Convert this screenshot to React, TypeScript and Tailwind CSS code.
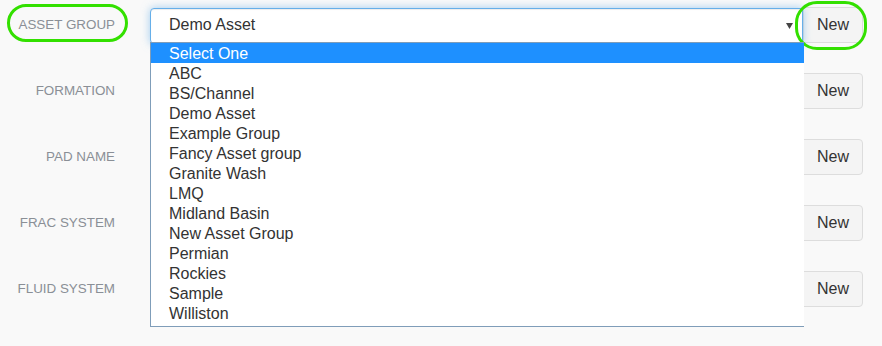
import React from "react";

const labels = ["ASSET GROUP", "FORMATION", "PAD NAME", "FRAC SYSTEM", "FLUID SYSTEM"];
const options = [
  "Select One",
  "ABC",
  "BS/Channel",
  "Demo Asset",
  "Example Group",
  "Fancy Asset group",
  "Granite Wash",
  "LMQ",
  "Midland Basin",
  "New Asset Group",
  "Permian",
  "Rockies",
  "Sample",
  "Williston",
];

export default function App() {
  return (
    <div
      className="relative h-[346px] w-[882px] overflow-hidden bg-[#f9f9f9]"
      style={{ fontFamily: '"Liberation Sans", Arial, sans-serif' }}
    >
      <div className="flex flex-col gap-[30px] pt-[7px]">
        {labels.map((label, i) => (
          <div key={label} className="flex h-[36px] items-center">
            <div className="w-[115px] text-right text-[13.4px] uppercase leading-none text-[#8a8f96]">
              {label}
            </div>
            <div className="ml-[35px] w-[653px] self-stretch">
              {i === 0 ? (
                <div className="relative mt-[1px] h-[36px] w-[653px] rounded-l-[4px] border border-[#66afe9] bg-white shadow-[0_0_8px_rgba(102,175,233,0.6),inset_0_1px_1px_rgba(0,0,0,0.075)]">
                  <div className="flex h-full items-center pl-[18px] pb-[3px] text-[16px] text-[#333]">
                    Demo Asset
                  </div>
                  <svg
                    className="absolute right-[9px] top-[14px]"
                    width="7"
                    height="6"
                    viewBox="0 0 7 6"
                  >
                    <polygon points="0,0 7,0 3.5,6" fill="#444" />
                  </svg>
                  <div className="absolute left-[-1px] top-[33px] z-10 w-[654px] border-y border-l border-[#7f9db9] bg-white pb-[3px]">
                    {options.map((o, j) => (
                      <div
                        key={o}
                        className={
                          "flex h-[20px] items-center pl-[18px] pt-[2px] text-[16px] leading-none " +
                          (j === 0 ? "bg-[#1e90ff] text-white" : "text-[#333]")
                        }
                      >
                        {o}
                      </div>
                    ))}
                  </div>
                </div>
              ) : (
                <div className="h-[36px] w-[653px] rounded-l-[4px] border border-[#ccc] bg-white" />
              )}
            </div>
            <button className="flex h-[36px] w-[60px] items-center justify-center rounded-r-[4px] border border-[#ddd] bg-[#f4f4f4] text-[16px] text-[#333]">
              New
            </button>
          </div>
        ))}
      </div>
      <div className="pointer-events-none absolute left-[7px] top-[4px] h-[38px] w-[121px] rounded-full border-[3px] border-[#33e000]" />
      <div className="pointer-events-none absolute left-[795px] top-[1px] h-[49px] w-[72px] rounded-[22px] border-[3px] border-[#33e000]" />
    </div>
  );
}
